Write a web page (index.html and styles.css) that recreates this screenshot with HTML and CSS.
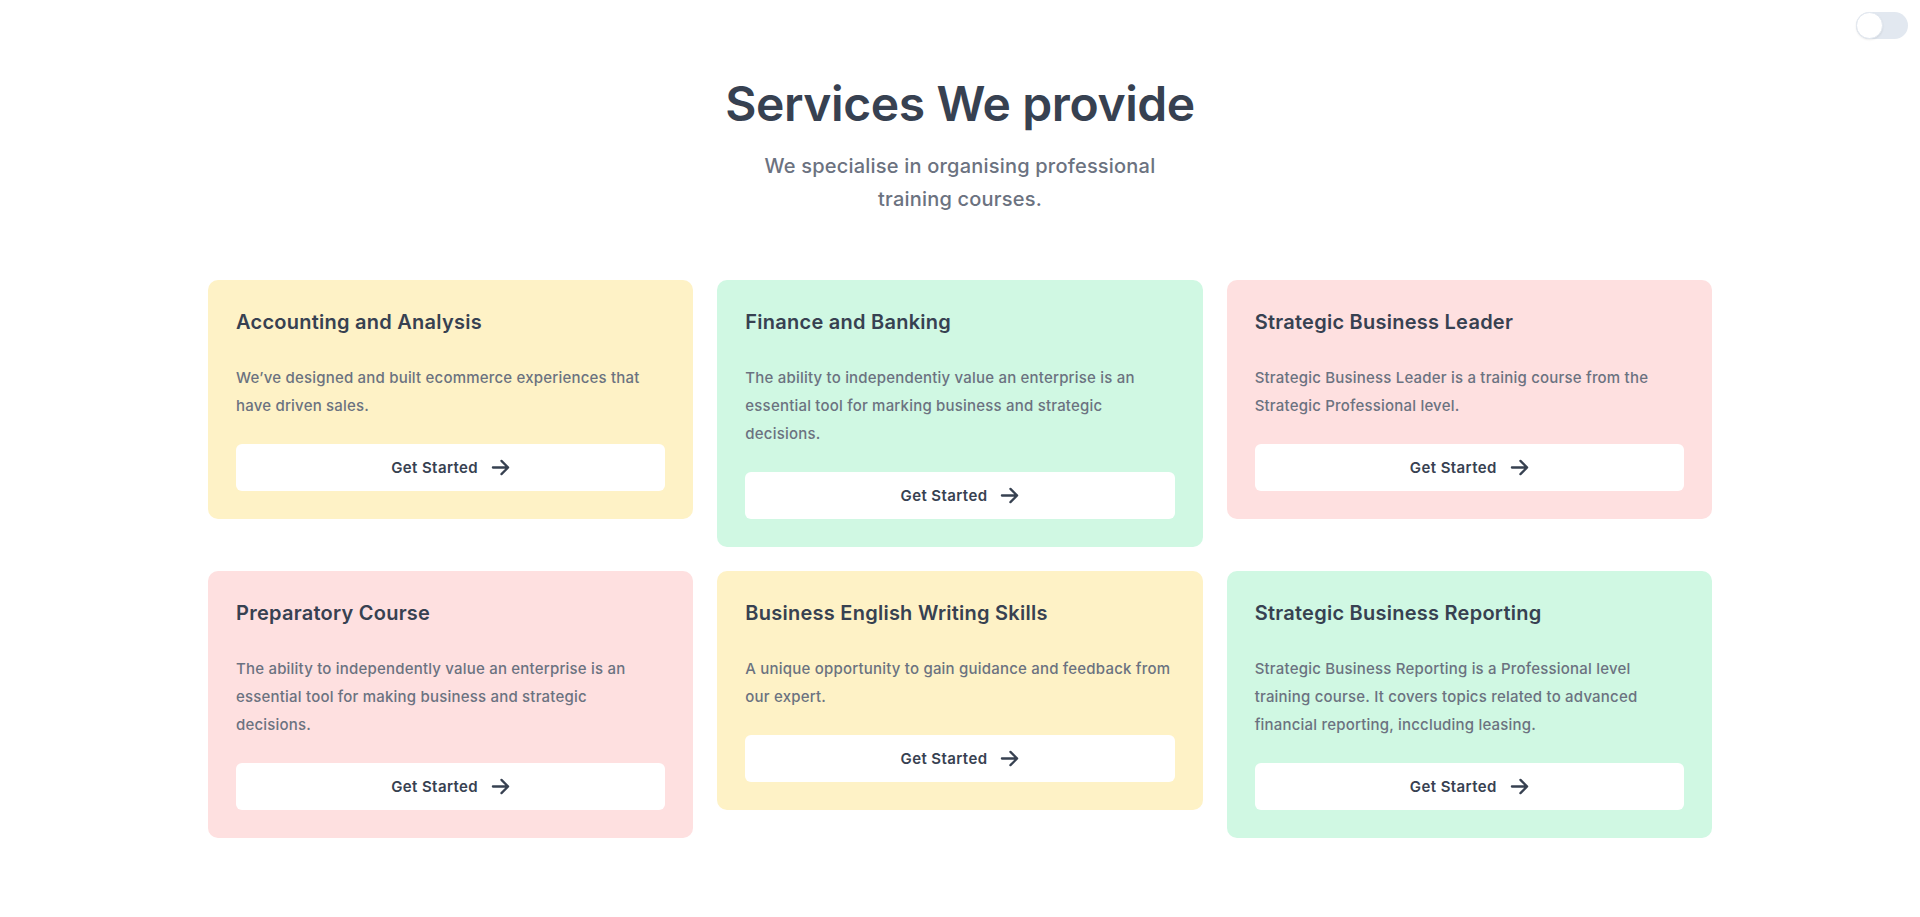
FILE: index.html
```html
<!DOCTYPE html>
<html lang="en">
<head>
<meta charset="utf-8">
<title>Services We provide</title>
<link rel="stylesheet" href="styles.css">
</head>
<body>
<div class="toggle" role="switch" aria-checked="false"><span class="knob"></span></div>
<section class="services">
  <header class="intro">
    <h1>Services We provide</h1>
    <p>We specialise in organising professional training courses.</p>
  </header>
  <div class="grid">
    <article class="card yellow">
      <h2>Accounting and Analysis</h2>
      <p>We’ve designed and built ecommerce experiences that have driven sales.</p>
      <a class="btn" href="#">Get Started <svg viewBox="0 0 20 20" width="19" height="19" fill="none" stroke="currentColor" stroke-width="2.4" stroke-linecap="round" stroke-linejoin="round"><path d="M2 10h16M11 3l7 7-7 7"/></svg></a>
    </article>
    <article class="card green">
      <h2>Finance and Banking</h2>
      <p>The ability to independentiy value an enterprise is an essential tool for marking business and strategic decisions.</p>
      <a class="btn" href="#">Get Started <svg viewBox="0 0 20 20" width="19" height="19" fill="none" stroke="currentColor" stroke-width="2.4" stroke-linecap="round" stroke-linejoin="round"><path d="M2 10h16M11 3l7 7-7 7"/></svg></a>
    </article>
    <article class="card pink">
      <h2>Strategic Business Leader</h2>
      <p>Strategic Business Leader is a trainig course from the Strategic Professional level.</p>
      <a class="btn" href="#">Get Started <svg viewBox="0 0 20 20" width="19" height="19" fill="none" stroke="currentColor" stroke-width="2.4" stroke-linecap="round" stroke-linejoin="round"><path d="M2 10h16M11 3l7 7-7 7"/></svg></a>
    </article>
    <article class="card pink">
      <h2>Preparatory Course</h2>
      <p>The ability to independently value an enterprise is an essential tool for making business and strategic decisions.</p>
      <a class="btn" href="#">Get Started <svg viewBox="0 0 20 20" width="19" height="19" fill="none" stroke="currentColor" stroke-width="2.4" stroke-linecap="round" stroke-linejoin="round"><path d="M2 10h16M11 3l7 7-7 7"/></svg></a>
    </article>
    <article class="card yellow">
      <h2>Business English Writing Skills</h2>
      <p>A unique opportunity to gain guidance and feedback from our expert.</p>
      <a class="btn" href="#">Get Started <svg viewBox="0 0 20 20" width="19" height="19" fill="none" stroke="currentColor" stroke-width="2.4" stroke-linecap="round" stroke-linejoin="round"><path d="M2 10h16M11 3l7 7-7 7"/></svg></a>
    </article>
    <article class="card green">
      <h2>Strategic Business Reporting</h2>
      <p>Strategic Business Reporting is a Professional level training course. It covers topics related to advanced financial reporting, inccluding leasing.</p>
      <a class="btn" href="#">Get Started <svg viewBox="0 0 20 20" width="19" height="19" fill="none" stroke="currentColor" stroke-width="2.4" stroke-linecap="round" stroke-linejoin="round"><path d="M2 10h16M11 3l7 7-7 7"/></svg></a>
    </article>
  </div>
</section>
</body>
</html>
```
FILE: styles.css
```css
* { box-sizing: border-box; }
html, body { margin: 0; padding: 0; background: #fff; }
body {
  font-family: Inter, "Noto Sans", "Liberation Sans", sans-serif;
  color: #374151;
  min-height: 917px;
  position: relative;
}
.toggle {
  position: absolute;
  top: 12px;
  right: 12px;
  width: 52px;
  height: 27px;
  border-radius: 999px;
  background: #e2e8f0;
}
.knob {
  position: absolute;
  left: 0;
  top: 0;
  width: 27px;
  height: 27px;
  border-radius: 50%;
  background: #fff;
  border: 1px solid #e2e8f0;
  box-shadow: 0 1px 2px rgba(0,0,0,0.08);
}
.services {
  max-width: 1536px;
  margin: 0 auto;
  padding: 75px 16px 40px;
}
.intro { text-align: center; }
.intro h1 {
  margin: 0;
  font-size: 48px;
  line-height: 58px;
  font-weight: 600;
  color: #374151;
  letter-spacing: -0.4px;
}
.intro p {
  margin: 17px auto 0;
  max-width: 448px;
  font-size: 20px;
  line-height: 33px;
  font-weight: 500;
  letter-spacing: 0.2px;
  color: #6b7280;
}
.grid {
  margin-top: 64px;
  display: grid;
  grid-template-columns: repeat(3, 1fr);
  gap: 24px;
  align-items: start;
}
.card {
  border-radius: 10px;
  padding: 28px;
}
.yellow { background: #fef2c6; }
.green { background: #d0f8e3; }
.pink { background: #fee0e0; }
.card h2 {
  margin: 0;
  font-size: 20px;
  line-height: 28px;
  font-weight: 600;
  letter-spacing: 0.25px;
  color: #374151;
}
.card p {
  margin: 28px 0 0;
  font-size: 15px;
  line-height: 28px;
  font-weight: 500;
  letter-spacing: 0.2px;
  color: #6b7280;
}
.btn {
  margin-top: 24px;
  display: flex;
  align-items: center;
  justify-content: center;
  gap: 13px;
  height: 47px;
  background: #fff;
  border-radius: 6px;
  text-decoration: none;
  font-size: 15px;
  font-weight: 600;
  letter-spacing: 0.4px;
  color: #374151;
}
.btn svg { display: block; }
```
